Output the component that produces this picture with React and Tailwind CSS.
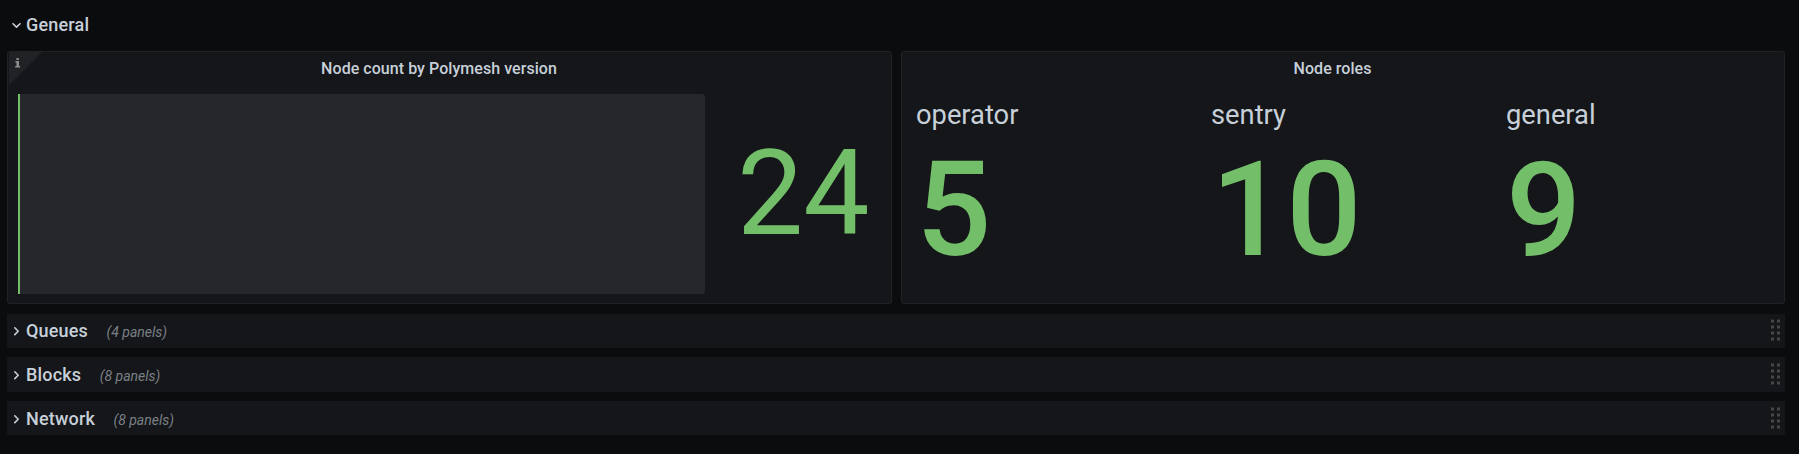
function Chevron({ open }) {
  return (
    <svg className="h-[18px] w-[18px] shrink-0" viewBox="0 0 18 18" fill="none" stroke="#c7d0d9" strokeWidth="1.6" strokeLinecap="round" strokeLinejoin="round">
      <path d={open ? 'M6 7.7 9.5 11.1l3.5-3.4' : 'M7.8 5.8 11.2 9.2 7.8 12.6'} />
    </svg>
  );
}

function Grip() {
  return (
    <svg className="ml-auto h-[24px] w-[10px]" viewBox="0 0 10 24">
      {[0, 6, 12, 18].flatMap((y) =>
        [0, 6].map((x) => (
          <g key={x + '-' + y}>
            <rect x={x} y={y} width="3" height="4" fill="#2b2c2e" />
            <rect x={x} y={y + 1} width="3" height="2" fill="#454648" />
          </g>
        )),
      )}
    </svg>
  );
}

function Row({ title, count, className }) {
  return (
    <div className={'flex items-center bg-[#141619] pr-[4px] ' + className}>
      <Chevron />
      <span className="ml-px text-[18px] font-medium leading-[32px] tracking-[0.01em]">{title}</span>
      <span className="ml-[18.5px] pt-[2px] text-[14px] italic text-[#7b8087]">({count} panels)</span>
      <Grip />
    </div>
  );
}

function Stat({ name, value }) {
  return (
    <div className="w-[295px] shrink-0">
      <div className="text-[27.3px] leading-[34px]">{name}</div>
      <div className="text-[132.6px] font-medium leading-[155px] text-[#73bf69]">{value}</div>
    </div>
  );
}

function Panel({ title, className, children }) {
  return (
    <div className={'relative h-[253px] overflow-hidden rounded-[3px] border border-[#202226] bg-[#141619] ' + className}>
      <h2 className="h-[34px] pr-[21px] text-center text-[16px] font-medium leading-[34px] tracking-[0.003em]">{title}</h2>
      {children}
    </div>
  );
}

export default function App() {
  return (
    <div className="h-[454px] overflow-hidden bg-[#0b0c0e] pl-[7px] pr-[14px] font-[Roboto,sans-serif] text-[#c7d0d9]">
      <div className="flex h-[51px] items-center pb-[2px]">
        <Chevron open />
        <span className="ml-px text-[18px] font-medium tracking-[0.01em]">General</span>
      </div>
      <div className="flex gap-[9px]">
        <Panel title="Node count by Polymesh version" className="w-[885px]">
          <svg className="absolute left-[1px] top-0 h-[33px] w-[33px]" viewBox="0 0 33 33">
            <path d="M0 0h33L0 33Z" fill="#202226" />
            <path d="M7 9h3v5h1.2v1.6H6.2V14h1.3v-3.4H6.4V9ZM7.4 6h2.4v2H7.4Z" fill="#8e8e8e" />
          </svg>
          <div className="flex px-[10px] pt-[8px]">
            <div className="h-[200px] w-[687px] shrink-0 rounded-r-[3px] border-l-2 border-[#73bf69] bg-[#25272b]" />
            <div className="ml-[32px] text-[118px] leading-[201px] text-[#73bf69]">24</div>
          </div>
        </Panel>
        <Panel title="Node roles" className="w-[884px]">
          <div className="flex pl-[14px] pt-[12px]">
            <Stat name="operator" value="5" />
            <Stat name="sentry" value="10" />
            <Stat name="general" value="9" />
          </div>
        </Panel>
      </div>
      <div className="mt-[10px] flex flex-col gap-[9px]">
        <Row title="Queues" count="4" className="h-[34px]" />
        <Row title="Blocks" count="8" className="h-[35px] pt-px" />
        <Row title="Network" count="8" className="h-[34px] pt-[2px]" />
      </div>
    </div>
  );
}
